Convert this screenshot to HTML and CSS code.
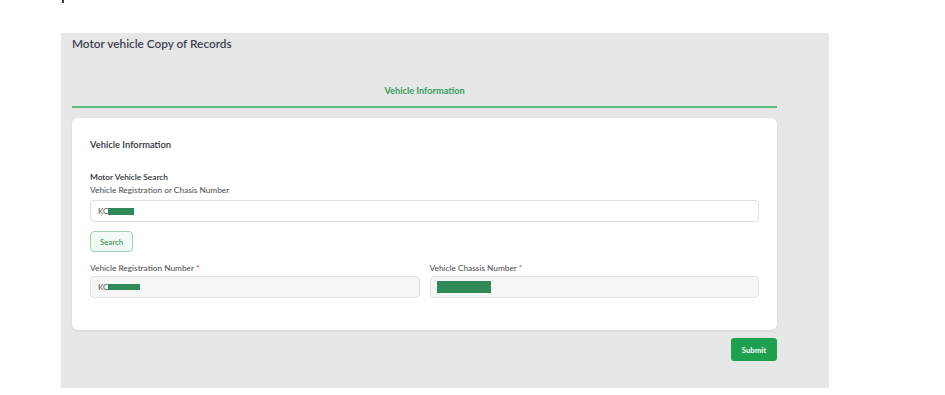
FILE: index.html
```html
<!DOCTYPE html>
<html lang="en">
 <head>
    <meta charset="utf-8">
    <title>Motor vehicle Copy of Records</title>
    <link rel="stylesheet" href="styles.css">
 </head>
 <body>
    <div class="mark"></div>

    <div id="page">
        <h3 class="title">Motor vehicle Copy of Records</h3>

        <div class="tabs">
            <div class="tab">Vehicle Information</div>
        </div>

        <div class="card">
            <h4 class="cardTitle">Vehicle Information</h4>

            <div class="label strong">Motor Vehicle Search</div>
            <div class="label">Vehicle Registration or Chasis Number</div>
            <div class="input">KC<span class="hide h1"></span></div>

            <button class="search">Search</button>

            <div class="row">
                <div class="field">
                    <div class="label">Vehicle Registration Number <span class="req">*</span></div>
                    <div class="input grey">KC<span class="hide h2"></span></div>
                </div>
                <div class="field">
                    <div class="label">Vehicle Chassis Number <span class="req">*</span></div>
                    <div class="input grey"><span class="hide h3"></span></div>
                </div>
            </div>
        </div>

        <div class="actions">
            <button class="submit">Submit</button>
        </div>
    </div>
 </body>
</html>
```

FILE: styles.css
```css
html, body {
    margin: 0;
    padding: 0;
}

body {
    background-color: white;
    font-family: Lato, "Open Sans", sans-serif;
    color: #3b3b45;
}

.mark {
    width: 2px;
    height: 3px;
    margin-left: 62px;
    background: #2b3a6b;
}

#page {
    margin: 30px 0 0 61px;
    width: 705px;
    height: 346px;
    padding: 3px 52px 6px 11px;
    background: #e5e8e6;
}

.title {
    margin: 0;
    font-size: 11.8px;
    font-weight: 600;
    color: #3f4052;
}

.tabs {
    margin-top: 34px;
    border-bottom: 2px solid #5fbb83;
}

.tab {
    padding-bottom: 10px;
    text-align: center;
    font-size: 9.2px;
    font-weight: bold;
    color: #3a9c5e;
}

.card {
    margin-top: 10px;
    padding: 21px 18px 32px 18px;
    background: white;
    border-radius: 6px;
    box-shadow: 0 1px 2px rgba(0, 0, 0, 0.08);
}

.cardTitle {
    margin: 0 0 23px 0;
    font-size: 9.4px;
    font-weight: 600;
    color: #2f2f38;
}

.label {
    font-size: 8.3px;
    color: #4a4a52;
    margin-bottom: 4px;
    height: 9px;
    line-height: 9px;
}

.label.strong {
    font-weight: 600;
    color: #2f2f38;
}

.req {
    color: #d9534f;
}

.input {
    box-sizing: border-box;
    height: 22px;
    padding: 0 7px;
    display: flex;
    align-items: center;
    font-size: 8px;
    color: #555;
    background: white;
    border: 1px solid #dfe2e0;
    border-radius: 4px;
    margin-top: 5px;
}

.input.grey {
    background: #f5f6f5;
    margin-top: -1px;
}

.hide {
    display: inline-block;
    background: #2f8a57;
}

.h1 {
    width: 26px;
    height: 7px;
}

.h2 {
    width: 32px;
    height: 6px;
}

.h3 {
    width: 54px;
    height: 12px;
    margin-left: -1px;
}

.search {
    display: block;
    margin-top: 9px;
    width: 43px;
    height: 21px;
    font-family: Lato, sans-serif;
    font-size: 7.8px;
    font-weight: 600;
    color: #3a9c5e;
    background: #f3faf5;
    border: 1px solid #9ed3b0;
    border-radius: 4px;
    padding: 0;
}

.row {
    margin-top: 12px;
    display: flex;
    gap: 10px;
}

.field {
    flex: 1;
}

.actions {
    display: flex;
    justify-content: flex-end;
    margin-top: 8px;
}

.submit {
    width: 46px;
    height: 23px;
    font-family: Lato, sans-serif;
    font-size: 7.8px;
    font-weight: bold;
    color: white;
    background: #1fa04f;
    border: none;
    border-radius: 3px;
    padding: 0;
}
```
